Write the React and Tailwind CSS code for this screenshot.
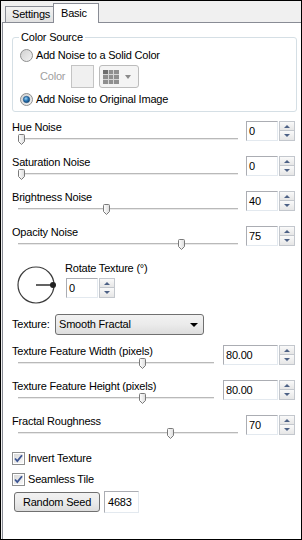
const Radio = ({ checked }) => (
  <svg width="13" height="13" viewBox="0 0 13 13" className="shrink-0">
    <defs>
      <linearGradient id={checked ? "rg1" : "rg0"} x1="0" y1="0" x2="1" y2="1">
        <stop offset="0" stopColor="#cfcfcf" />
        <stop offset="1" stopColor="#f4f4f4" />
      </linearGradient>
      <radialGradient id="rdot" cx="0.4" cy="0.35" r="0.7">
        <stop offset="0" stopColor="#9fd3f5" />
        <stop offset="0.5" stopColor="#2a79b8" />
        <stop offset="1" stopColor="#10406e" />
      </radialGradient>
    </defs>
    <circle cx="6.5" cy="6.5" r="6" fill={`url(#${checked ? "rg1" : "rg0"})`} stroke="#8e8f8f" />
    {checked && <circle cx="6.5" cy="6.5" r="3.2" fill="url(#rdot)" stroke="#1b4f80" strokeWidth="0.6" />}
  </svg>
);

const Checkbox = () => (
  <svg width="13" height="13" viewBox="0 0 13 13" className="shrink-0">
    <defs>
      <linearGradient id="cbg" x1="0" y1="0" x2="1" y2="1">
        <stop offset="0" stopColor="#d9d9d9" />
        <stop offset="1" stopColor="#f7f7f7" />
      </linearGradient>
    </defs>
    <rect x="0.5" y="0.5" width="12" height="12" fill="#fff" stroke="#8e8f8f" />
    <rect x="2" y="2" width="9" height="9" fill="url(#cbg)" />
    <path d="M3 6.5 L5.3 9 L10 3.2" fill="none" stroke="#3c5593" strokeWidth="1.8" />
  </svg>
);

const Spin = ({ value, w = "w-[32px]" }) => (
  <div className="flex shrink-0">
    <div className={`${w} h-[20px] border border-[#abadb3] border-r-[#e3e9ef] border-b-[#e3e9ef] bg-white pl-[2px] leading-[18px] text-[11px]`}>
      {value}
    </div>
    <div className="w-[16px] h-[20px] flex flex-col ml-px">
      <div className="h-[10px] border border-[#c3c7cd] bg-gradient-to-b from-[#fafafa] to-[#e6e6e6] flex items-center justify-center">
        <div className="w-0 h-0 border-l-[3px] border-r-[3px] border-b-[3px] border-l-transparent border-r-transparent border-b-[#4d6185]" />
      </div>
      <div className="h-[10px] border border-t-0 border-[#c3c7cd] bg-gradient-to-b from-[#fafafa] to-[#e6e6e6] flex items-center justify-center">
        <div className="w-0 h-0 border-l-[3px] border-r-[3px] border-t-[3px] border-l-transparent border-r-transparent border-t-[#4d6185]" />
      </div>
    </div>
  </div>
);

const Slider = ({ w, frac }) => (
  <div className="relative h-[12px] ml-[6px]" style={{ width: w }}>
    <div className="absolute left-0 right-0 top-[4px] h-[2px] bg-[#b9b9b9] border-b border-[#e9e9e9]" />
    <svg
      width="7"
      height="11"
      viewBox="0 0 7 11"
      className="absolute top-0"
      style={{ left: Math.round(frac * (w - 7)) }}
    >
      <defs>
        <linearGradient id="thumb" x1="0" y1="0" x2="1" y2="0">
          <stop offset="0" stopColor="#ffffff" />
          <stop offset="1" stopColor="#dcdcdc" />
        </linearGradient>
      </defs>
      <path d="M0.5 1.5 Q0.5 0.5 1.5 0.5 H5.5 Q6.5 0.5 6.5 1.5 V7.5 L3.5 10.5 L0.5 7.5 Z" fill="url(#thumb)" stroke="#7a7a7a" />
    </svg>
  </div>
);

const SliderRow = ({ label, value, frac, trackW, boxW }) => (
  <div className="flex items-start h-[35px]">
    <div className="flex-1 flex flex-col">
      <div className="h-[13px] leading-[13px]">{label}</div>
      <Slider w={trackW} frac={frac} />
    </div>
    <Spin value={value} w={boxW} />
  </div>
);

export default function App() {
  return (
    <div className="w-[302px] h-[540px] border border-black bg-[#f0f0f0] flex flex-col pl-[1px] text-[11px] tracking-[-0.2px] text-black font-['Liberation_Sans',Arial,sans-serif]">
      {/* tab strip */}
      <div className="h-[21px] flex items-end pl-[3px]">
        <div className="w-[49px] h-[16px] border border-b-0 border-[#898c95] bg-gradient-to-b from-[#f3f3f3] to-[#e1e1e1] pl-[6px] leading-[15px]">
          Settings
        </div>
        <div className="relative z-10 -ml-px -mb-px w-[46px] h-[20px] border border-b-0 border-[#898c95] bg-white pl-[7px] leading-[19px]">
          Basic
        </div>
      </div>

      <div className="flex-1 border border-b-0 border-r-0 border-[#898c95] bg-white pl-[9px] pr-[6px]">
        {/* Color Source group */}
        <div className="relative mt-[14px] -mr-[2px] h-[75px] border border-[#d5dfe5] rounded-[3px]">
          <span className="absolute -top-[7px] left-[6px] bg-white px-[2px] leading-[13px]">Color Source</span>
          <div className="flex items-center h-[13px] mt-[11px] pl-[7px]">
            <Radio />
            <span className="ml-[3px] leading-[13px]">Add Noise to a Solid Color</span>
          </div>
          <div className="flex items-center mt-[3px] pl-[27px]">
            <span className="w-[31px] text-[#a0a0a0]">Color</span>
            <div className="w-[23px] h-[23px] border border-[#c4c4c4] bg-[#f0f0f0]" />
            <div className="ml-[5px] w-[40px] h-[23px] border border-[#bcbcbc] rounded-[3px] bg-[#f4f4f4] flex items-center pl-[3px]">
              <svg width="16" height="14" viewBox="0 0 16 14">
                <rect x="0" y="0" width="16" height="14" fill="#8f8f8f" />
                <rect x="0" y="0" width="5" height="4" fill="#6f6f6f" />
                <path d="M5.5 0 V14 M10.5 0 V14 M0 4.5 H16 M0 9.5 H16" stroke="#d6d6d6" />
              </svg>
              <div className="ml-[6px] w-0 h-0 border-l-[3.5px] border-r-[3.5px] border-t-[4px] border-l-transparent border-r-transparent border-t-[#8a8a8a]" />
            </div>
          </div>
          <div className="flex items-center h-[13px] mt-[5px] pl-[7px]">
            <Radio checked />
            <span className="ml-[3px] leading-[13px]">Add Noise to Original Image</span>
          </div>
        </div>

        <div className="mt-[9px]">
          <SliderRow label="Hue Noise" value="0" frac={0} trackW={220} />
          <SliderRow label="Saturation Noise" value="0" frac={0} trackW={220} />
          <SliderRow label="Brightness Noise" value="40" frac={0.4} trackW={220} />
          <SliderRow label="Opacity Noise" value="75" frac={0.75} trackW={220} />
        </div>

        {/* Rotate texture */}
        <div className="flex items-start mt-[4px]">
          <svg width="40" height="40" viewBox="0 0 40 40" className="ml-[4px] shrink-0">
            <circle cx="20" cy="20" r="18" fill="none" stroke="#3c3c3c" strokeWidth="1.2" />
            <line x1="20" y1="20" x2="37" y2="20" stroke="#3c3c3c" strokeWidth="1.6" />
            <circle cx="37" cy="20" r="3" fill="#222" />
          </svg>
          <div className="ml-[9px] -mt-[3px] flex flex-col">
            <div className="h-[13px] leading-[13px]">Rotate Texture (°)</div>
            <div className="mt-[3px] ml-[1px]">
              <Spin value="0" w="w-[32px]" />
            </div>
          </div>
        </div>

        {/* Texture dropdown */}
        <div className="flex items-center mt-[9px]">
          <span className="w-[43px]">Texture:</span>
          <div className="w-[149px] h-[21px] border border-[#707070] rounded-[3px] bg-gradient-to-b from-[#f2f2f2] via-[#ebebeb] to-[#dddddd] flex items-center pl-[3px] pr-[5px]">
            <span className="flex-1">Smooth Fractal</span>
            <div className="w-0 h-0 border-l-[4px] border-r-[4px] border-t-[4px] border-l-transparent border-r-transparent border-t-black" />
          </div>
        </div>

        <div className="mt-[10px]">
          <SliderRow label="Texture Feature Width (pixels)" value="80.00" frac={0.64} trackW={196} boxW="w-[55px]" />
          <SliderRow label="Texture Feature Height (pixels)" value="80.00" frac={0.64} trackW={196} boxW="w-[55px]" />
          <SliderRow label="Fractal Roughness" value="70" frac={0.7} trackW={220} />
        </div>

        <div className="flex items-center h-[13px] mt-[2px]">
          <Checkbox />
          <span className="ml-[3px]">Invert Texture</span>
        </div>
        <div className="flex items-center h-[13px] mt-[8px]">
          <Checkbox />
          <span className="ml-[3px]">Seamless Tile</span>
        </div>

        <div className="flex items-center mt-[5px]">
          <button className="ml-[2px] w-[86px] h-[20px] border border-[#707070] rounded-[3px] bg-gradient-to-b from-[#f2f2f2] via-[#ebebeb] to-[#dddddd] text-[11px] tracking-[-0.2px]">
            Random Seed
          </button>
          <div className="ml-[4px] w-[35px] h-[22px] border border-[#abadb3] border-r-[#e3e9ef] border-b-[#e3e9ef] bg-white pl-[3px] leading-[20px]">
            4683
          </div>
        </div>
      </div>
    </div>
  );
}
